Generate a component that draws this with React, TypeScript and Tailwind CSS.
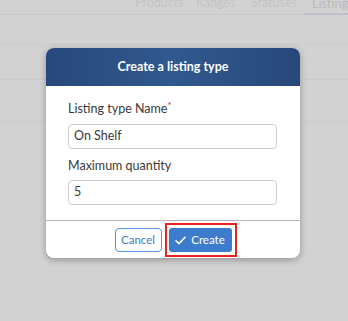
import React from 'react';

export default function App() {
  return (
    <div className="relative w-[348px] h-[321px] overflow-hidden bg-[#d2d2d2] font-['Lato','Open_Sans',sans-serif]">
      {/* faded page behind the overlay */}
      <div className="flex flex-col">
        <div className="flex items-end h-[15px] border-b border-[#cacaca] pl-[135px] text-[12.5px] leading-[15px] text-[#c4c4c4]">
          <div className="w-[44px] text-center pb-[4px]">Products</div>
          <div className="ml-[17px] w-[38px] text-center pb-[4px]">Ranges</div>
          <div className="ml-[17px] w-[43px] text-center pb-[4px]">Statuses</div>
          <div className="ml-[9px] w-[45px] pl-[9px] pb-[2px] border-b-2 border-[#c0c0cb] text-[#b9b9b9] -mb-px whitespace-nowrap">
            Listing
          </div>
        </div>
        <div className="h-[30px] border-b border-[#cbcbcb]" />
        <div className="h-[35px] border-b border-[#cbcbcb]" />
        <div className="h-[42px] border-b border-[#cbcbcb]" />
      </div>

      {/* modal */}
      <div className="absolute left-[46px] top-[48px] w-[254px] rounded-[8px] bg-white shadow-[0_2px_7px_rgba(0,0,0,0.3)] overflow-hidden">
        <div className="h-[38px] flex items-center justify-center bg-gradient-to-r from-[#27487a] via-[#31598f] to-[#27487a] text-white font-bold text-[12.5px]">
          Create a listing type
        </div>
        <div className="px-[22px] pt-[15px] pb-[15px] text-[#3a3a3a] text-[12.5px]">
          <div className="leading-[16px]">
            Listing type Name<span className="text-[#c62828] text-[10px] relative -top-[4px]">*</span>
          </div>
          <div className="mt-[7px] h-[25px] w-[209px] rounded-[4px] border border-[#cfcfcf] flex items-center px-[5px]">
            On Shelf
          </div>
          <div className="mt-[9px] leading-[16px]">Maximum quantity</div>
          <div className="mt-[6px] h-[25px] w-[209px] rounded-[4px] border border-[#cfcfcf] flex items-center px-[5px]">
            5
          </div>
        </div>
        <div className="border-t border-[#b8b8b8] flex justify-center gap-[7px] pt-[7px] pb-[6px]">
          <button className="h-[24px] w-[47px] rounded-[4px] border border-[#5b92da] text-[#3f77c5] text-[11.5px] bg-white">
            Cancel
          </button>
          <div className="-ml-[4px] -mr-[5px] -my-[5px] pl-[2px] pr-[3px] py-[3px] border-2 border-[#e8231b]">
            <button className="h-[24px] w-[63px] rounded-[3px] bg-[#3d7bcc] text-white text-[11.5px] flex items-center justify-center gap-[5px]">
              <svg width="11" height="9" viewBox="0 0 11 9" fill="none">
                <path d="M1 4.8 L3.9 7.6 L10 1.4" stroke="white" strokeWidth="1.5" strokeLinecap="round" strokeLinejoin="round" />
              </svg>
              Create
            </button>
          </div>
        </div>
      </div>
    </div>
  );
}
